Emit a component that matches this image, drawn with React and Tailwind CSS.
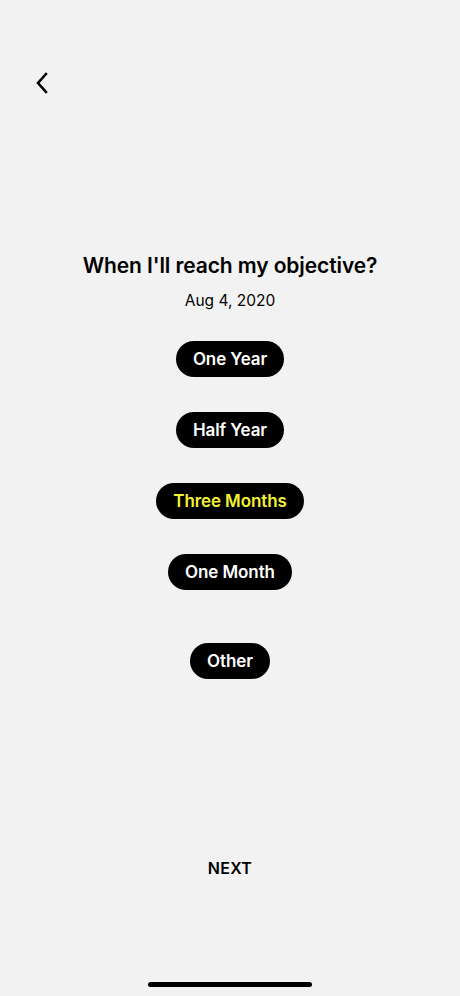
import React from "react";

const options = [
  { label: "One Year", selected: false },
  { label: "Half Year", selected: false },
  { label: "Three Months", selected: true },
  { label: "One Month", selected: false },
];

function Pill({ label, selected }) {
  return (
    <button
      className={`h-[36px] rounded-full bg-black px-[17px] text-[17px] font-semibold leading-none tracking-[-0.1px] ${
        selected ? "text-[#f2f235]" : "text-white"
      }`}
    >
      {label}
    </button>
  );
}

export default function App() {
  return (
    <div
      className="relative flex h-[996px] w-[460px] flex-col items-center bg-[#f2f2f2] text-black"
      style={{ fontFamily: "Inter, 'Noto Sans', 'Liberation Sans', sans-serif" }}
    >
      <div className="flex w-full px-[34px] pt-[72px]">
        <svg width="16" height="22" viewBox="0 0 16 22" fill="none">
          <path d="M12 2 L4 11 L12 20" stroke="black" strokeWidth="2.6" strokeLinecap="square" strokeLinejoin="miter" />
        </svg>
      </div>
      <h1 className="mt-[159px] text-[21px] font-semibold leading-[26px] tracking-[-0.1px]">
        When I'll reach my objective?
      </h1>
      <p className="mt-[12px] text-[15.5px] leading-[20px]">Aug 4, 2020</p>
      <div className="mt-[30px] flex flex-col items-center gap-[35px]">
        {options.map((o) => (
          <Pill key={o.label} {...o} />
        ))}
      </div>
      <div className="mt-[53px]">
        <Pill label="Other" />
      </div>
      <button className="mt-[179px] text-[16px] font-semibold leading-[20px] tracking-[0.3px]">NEXT</button>
      <div className="absolute bottom-[9px] left-1/2 h-[5px] w-[164px] -translate-x-1/2 rounded-full bg-black" />
    </div>
  );
}
